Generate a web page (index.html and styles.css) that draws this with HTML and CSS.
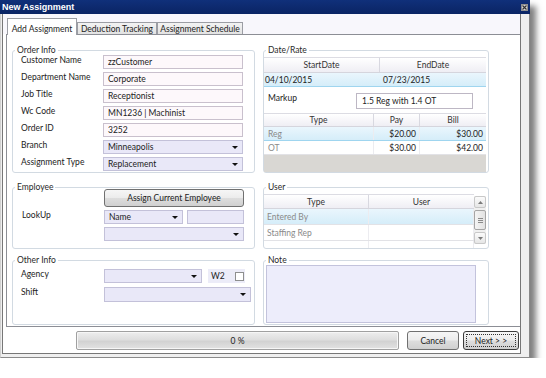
FILE: index.html
```html
<!DOCTYPE html>
<html>
<head>
<meta charset="utf-8">
<title>New Assignment</title>
<link rel="stylesheet" href="styles.css">
</head>
<body>
<div class="window">
  <div class="titlebar">
    <span class="title">New Assignment</span>
    <span class="close"><svg width="5" height="5" viewBox="0 0 5 5"><path d="M0.5 0.5L4.5 4.5M4.5 0.5L0.5 4.5" stroke="#333" stroke-width="1.1" fill="none"/></svg></span>
  </div>
  <div class="frame">
    <div class="client">
      <div class="tabs">
        <div class="tab active tab-add">Add Assignment</div>
        <div class="tab tab-ded">Deduction Tracking</div>
        <div class="tab tab-sched">Assignment Schedule</div>
      </div>
      <div class="panel">
        <fieldset class="group row1">
          <legend>Order Info</legend>
          <div class="form">
            <span class="lbl">Customer Name</span><div class="field">zzCustomer</div>
            <span class="lbl">Department Name</span><div class="field">Corporate</div>
            <span class="lbl">Job Title</span><div class="field">Receptionist</div>
            <span class="lbl">Wc Code</span><div class="field">MN1236 | Machinist</div>
            <span class="lbl">Order ID</span><div class="field">3252</div>
            <span class="lbl">Branch</span><div class="field combo">Minneapolis</div>
            <span class="lbl">Assignment Type</span><div class="field combo">Replacement</div>
          </div>
        </fieldset>
        <fieldset class="group row1">
          <legend>Date/Rate</legend>
          <div class="dr">
            <div class="dgrid date">
              <div class="dhead"><span>StartDate</span><span>EndDate</span></div>
              <div class="drow sel"><span>04/10/2015</span><span class="c2">07/23/2015</span></div>
            </div>
            <div class="markup">
              <span class="mk-lbl">Markup</span><div class="field">1.5 Reg with 1.4 OT</div>
            </div>
            <div class="dgrid pay">
              <div class="dhead"><span>Type</span><span>Pay</span><span>Bill</span></div>
              <div class="drow sel"><span class="muted">Reg</span><span class="num">$20.00</span><span class="num">$30.00</span></div>
              <div class="drow"><span class="muted">OT</span><span class="num">$30.00</span><span class="num">$42.00</span></div>
            </div>
          </div>
        </fieldset>
        <fieldset class="group row2">
          <legend>Employee</legend>
          <div class="emp">
            <button class="btn btn-assign">Assign Current Employee</button>
            <span class="lbl emp-lbl">LookUp</span>
            <div class="field combo emp-name">Name</div>
            <div class="field lav emp-text"></div>
            <div class="field combo emp-combo"></div>
          </div>
        </fieldset>
        <fieldset class="group row2">
          <legend>User</legend>
          <div class="ugrid">
            <div class="ugrid-main">
              <div class="dhead"><span>Type</span><span>User</span></div>
              <div class="drow sel"><span class="muted">Entered By</span><span></span></div>
              <div class="drow"><span class="muted">Staffing Rep</span><span></span></div>
              <div class="drow"><span class="muted"></span><span></span></div>
            </div>
            <div class="sbar">
              <div class="sb-btn"><svg width="5" height="3" viewBox="0 0 5 3"><path d="M0 3L2.5 0L5 3Z" fill="#7a7a7a"/></svg></div>
              <div class="sb-thumb"><span></span><span></span><span></span></div>
              <div class="sb-btn"><svg width="5" height="3" viewBox="0 0 5 3"><path d="M0 0L2.5 3L5 0Z" fill="#7a7a7a"/></svg></div>
            </div>
          </div>
        </fieldset>
        <fieldset class="group row3">
          <legend>Other Info</legend>
          <div class="other">
            <span class="lbl">Agency</span>
            <div class="field combo agency"></div>
            <div class="w2"><span>W2</span><span class="check"></span></div>
            <span class="lbl">Shift</span>
            <div class="field combo shift"></div>
          </div>
        </fieldset>
        <fieldset class="group row3">
          <legend>Note</legend>
          <div class="note-box"></div>
        </fieldset>
      </div>
      <div class="footer">
        <div class="progress">0 %</div>
        <button class="btn btn-cancel">Cancel</button>
        <button class="btn btn-next"><span class="focus">Next &gt; &gt;</span></button>
      </div>
    </div>
  </div>
</div>
</body>
</html>
```

FILE: styles.css
```css
* { box-sizing: border-box; }
html, body { margin: 0; padding: 0; background: #fff; }
body {
  font-family: Lato, "Liberation Sans", Arial, sans-serif;
  font-size: 8.5px;
  line-height: 10px;
  color: #222;
}

.window {
  width: 530px;
  height: 358px;
  display: flex;
  flex-direction: column;
  box-shadow: 6px 6px 6px rgba(0, 0, 0, 0.5);
}

.titlebar {
  height: 14px;
  flex: none;
  display: flex;
  align-items: center;
  justify-content: space-between;
  padding: 0 2px;
  background: linear-gradient(#10307a, #0a2464);
}
.title {
  color: #fff;
  font-family: "Liberation Sans", Arial, sans-serif;
  font-weight: bold;
  font-size: 9px;
}
.close {
  width: 7px;
  height: 7px;
  background: #d4d4d4;
  border: 1px solid #8f8f8f;
  display: flex;
  align-items: center;
  justify-content: center;
}

.frame {
  flex: 1;
  display: flex;
  padding: 0 8px 3px 1px;
  background: #efefef;
  border-left: 1px solid #d0d0d0;
  border-right: 1px solid #8a8a8a;
  border-bottom: 1px solid #8a8a8a;
}
.client {
  flex: 1;
  display: flex;
  flex-direction: column;
  background: #fff;
  border: 1px solid #777;
  border-top: none;
}

/* tabs */
.tabs {
  height: 20px;
  flex: none;
  display: flex;
  align-items: flex-end;
  padding-left: 4px;
  background: #f8f7fc;
}
.tab {
  height: 12px;
  display: flex;
  align-items: center;
  justify-content: center;
  border: 1px solid #9b9da4;
  border-bottom: none;
  background: linear-gradient(#f3f3f3, #e2e2e2);
  white-space: nowrap;
}
.tab.active {
  height: 17px;
  margin-bottom: -1px;
  padding-top: 3px;
  background: #fff;
  position: relative;
}
.tab-add { width: 70px; }
.tab-ded { width: 80px; }
.tab-sched { width: 86px; }

/* panel */
.panel {
  height: 293px;
  flex: none;
  margin-left: 3px;
  border: 1px solid #8c8e95;
  border-right: none;
  padding: 10px 0 0 5px;
  display: grid;
  grid-template-columns: 243px 226px;
  grid-template-rows: 128px 76px 76px;
  column-gap: 8px;
  align-items: start;
}

.group {
  margin: 0;
  padding: 0;
  min-width: 0;
  border: 1px solid #d2dae2;
  border-radius: 3px;
}
.group legend {
  margin-left: 2px;
  padding: 0 2px;
  font-size: 8.5px;
  line-height: 10px;
  color: #2a2a2a;
}
.row1 { height: 128px; }
.row2 { height: 67px; margin-top: 9px; }
.row3 { height: 70px; margin-top: 6px; }

.lbl {
  line-height: 10px;
  align-self: start;
  white-space: nowrap;
}
.field {
  height: 14px;
  display: flex;
  align-items: center;
  padding-left: 4px;
  border: 1px solid #c9c0cd;
  background: #fdf8fb;
  white-space: nowrap;
}
.field.lav { background: #e9e8f8; border-color: #c3c1d9; }
.combo {
  justify-content: space-between;
  padding-right: 4px;
  background: #e9e8f8;
  border-color: #c3c1d9;
}
.combo::after {
  content: "";
  margin-left: auto;
  border-left: 3px solid transparent;
  border-right: 3px solid transparent;
  border-top: 3px solid #111;
}

/* order info */
.form {
  display: grid;
  grid-template-columns: 82px 140px;
  grid-auto-rows: 14px;
  row-gap: 3px;
  padding-left: 8px;
}

/* employee */
.emp {
  margin-top: -3px;
  padding-left: 8px;
  display: grid;
  grid-template-columns: 83px 79px 4px 57px;
  grid-template-rows: 18px 14px 14px;
  row-gap: 3px;
}
.btn {
  font: inherit;
  color: #222;
  border: 1px solid #707070;
  border-radius: 3px;
  padding: 0;
  background: linear-gradient(#f6f6f6 0%, #ececec 48%, #dddddd 52%, #d0d0d0 100%);
  display: flex;
  align-items: center;
  justify-content: center;
}
.btn-assign { grid-column: 2 / 5; grid-row: 1; }
.emp-lbl { grid-column: 1; grid-row: 2; margin-left: 1px; }
.emp-name { grid-column: 2; grid-row: 2; }
.emp-text { grid-column: 4; grid-row: 2; }
.emp-combo { grid-column: 2 / 5; grid-row: 3; }

/* other info */
.other {
  padding: 4px 0 0 8px;
  display: grid;
  grid-template-columns: 83px 98px 6px 37px 6px;
  grid-template-rows: 14px 15px;
  row-gap: 4px;
}
.other .lbl { grid-column: 1; }
.agency { grid-column: 2; }
.w2 {
  grid-column: 4;
  display: flex;
  align-items: center;
  justify-content: space-between;
  padding: 0 1px 0 3px;
  background: #ececf8;
}
.check {
  width: 9px;
  height: 9px;
  border: 1px solid #8e8f8f;
  background: #fff;
}
.shift { grid-column: 2 / 6; height: 15px; }

/* data grids */
.dr { padding: 2px 2px 0 0; }
.dhead, .drow { display: grid; }
.dhead {
  height: 16px;
  border-top: 1px solid #dcdce3;
  border-bottom: 1px solid #d5d5dd;
  background: linear-gradient(#ffffff, #efeef4);
  color: #333;
}
.dhead span {
  display: flex;
  align-items: center;
  justify-content: center;
  border-right: 1px solid #d8d8e0;
}
.dhead span:last-child { border-right: none; }
.drow span {
  display: flex;
  align-items: center;
  padding: 0 2px 0 1px;
  white-space: nowrap;
}
.drow.sel {
  background: linear-gradient(#eaf6fd, #d5edf9);
  border-top: 1px solid #b9e1f4;
  border-bottom: 1px solid #9fd5ef;
}
.muted { color: #8a8a8a; }

.date .dhead, .date .drow { grid-template-columns: 116px 1fr; }
.date .drow { height: 14px; border-top: none; }
.date .c2 { padding-left: 3px; }

.markup {
  margin-top: 6px;
  height: 16px;
  display: grid;
  grid-template-columns: 92px 117px;
}
.mk-lbl { padding: 0 0 0 4px; line-height: 10px; }
.markup .field { height: 16px; padding-left: 5px; border-color: #bdb7c4; background: #fff; }

.pay {
  margin-top: 4px;
  height: 59px;
  background: #d9d7d3;
}
.pay .dhead, .pay .drow { grid-template-columns: 110px 46px 1fr; }
.pay .dhead { height: 14px; }
.pay .drow { height: 14px; background: #fff; border-bottom: 1px solid #e2e2e6; }
.pay .drow.sel { background: linear-gradient(#eaf6fd, #d5edf9); border-top: none; border-bottom: 1px solid #9fd5ef; }
.pay .drow span { border-right: 1px solid #ececf0; }
.pay .drow span:last-child { border-right: none; }
.pay .muted { padding-left: 4px; }
.num { justify-content: flex-end; padding-right: 3px !important; }

.ugrid {
  margin-top: 2px;
  width: 222px;
  height: 54px;
  display: flex;
}
.ugrid-main { width: 210px; overflow: hidden; }
.ugrid .dhead, .ugrid .drow { grid-template-columns: 105px 1fr; }
.ugrid .dhead { height: 15px; }
.ugrid .drow { height: 16px; border-bottom: 1px solid #e2e2e6; }
.ugrid .drow span { border-right: 1px solid #ececf0; padding-left: 3px; }
.ugrid .drow.sel { border-top: none; }
.sbar {
  width: 12px;
  height: 48px;
  margin-top: 2px;
  display: flex;
  flex-direction: column;
  gap: 2px;
  background: #f0f0f0;
}
.sb-btn {
  height: 12px;
  border: 1px solid #c8c8c8;
  border-radius: 2px;
  background: linear-gradient(#fbfbfb, #e6e6e6);
  display: flex;
  align-items: center;
  justify-content: center;
}
.sb-thumb {
  flex: 1;
  border: 1px solid #a5a5a5;
  border-radius: 2px;
  background: linear-gradient(90deg, #f4f4f4, #e2e2e2);
  display: flex;
  flex-direction: column;
  align-items: center;
  justify-content: center;
  gap: 1px;
}
.sb-thumb span { width: 5px; height: 1px; background: #8a8a8a; }

.note-box {
  margin-left: 2px;
  width: 210px;
  height: 58px;
  background: #ededfb;
  border: 1px solid #c3c3dc;
}

/* footer */
.footer {
  flex: 1;
  display: flex;
  align-items: flex-start;
  padding: 4px 0 0 73px;
}
.progress {
  width: 323px;
  height: 19px;
  border: 1px solid #a0a0a0;
  border-radius: 2px;
  background: linear-gradient(#eeeeee 0%, #dedede 45%, #d2d2d2 55%, #e2e2e2 100%);
  box-shadow: inset 0 0 0 1px #f6f6f6;
  display: flex;
  align-items: center;
  justify-content: center;
}
.btn-cancel { width: 52px; height: 19px; margin-left: 8px; }
.btn-next { width: 56px; height: 19px; margin-left: 4px; border-color: #3c3c3c; padding: 2px; }
.focus {
  flex: 1;
  align-self: stretch;
  display: flex;
  align-items: center;
  justify-content: center;
  border: 1px dotted #333;
}
```
